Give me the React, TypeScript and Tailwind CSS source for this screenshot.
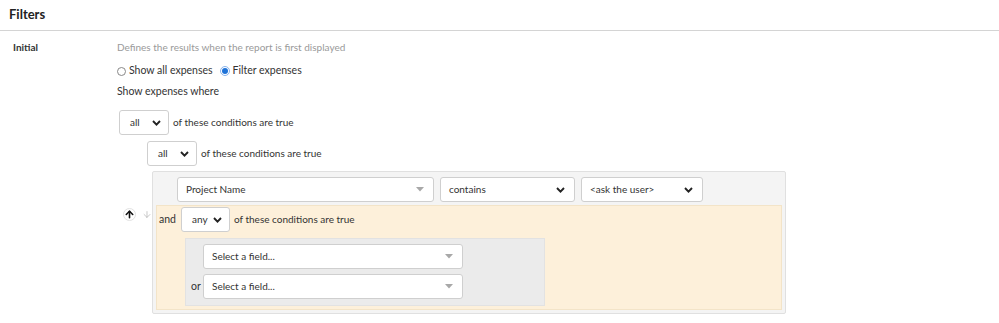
import { ArrowUp, ArrowDown } from "lucide-react"

function Chevron() {
    return (
        <svg width="9" height="6" viewBox="0 0 9 6" className="shrink-0">
            <path d="M1 1 L4.5 4.6 L8 1" fill="none" stroke="#222" strokeWidth="1.9" />
        </svg>
    )
}

function Caret() {
    return (
        <svg width="8" height="5" viewBox="0 0 8 5" className="shrink-0">
            <path d="M0 0 H8 L4 4.5 Z" fill="#a8a8a8" />
        </svg>
    )
}

function SmallSelect({ value, width }: { value: string; width: string }) {
    return (
        <div className={`${width} h-[25px] flex items-center justify-between pl-[10px] pr-[7px] bg-white border border-[#cfcfcf] rounded-[3px] text-[#333]`}>
            <span>{value}</span>
            <Chevron />
        </div>
    )
}

function FieldSelect({ value, width, caret }: { value: string; width: string; caret?: boolean }) {
    return (
        <div className={`${width} h-[25px] flex items-center justify-between pl-[8px] pr-[9px] bg-white border border-[#cfcfcf] rounded-[3px] text-[#333]`}>
            <span>{value}</span>
            {caret ? <Caret /> : <Chevron />}
        </div>
    )
}

export default function App() {
    return (
        <main className="w-[999px] h-[323px] bg-white text-[10px] text-[#333] font-['Lato','Noto_Sans',sans-serif] overflow-hidden">
            <div className="h-[31px] border-b border-[#d4d4d4] pl-[9px] pt-[5px]">
                <h2 className="text-[13px] font-bold text-[#222]">Filters</h2>
            </div>
            <div className="flex pt-[8px]">
                <div className="w-[117px] pl-[13px] font-bold text-[#333] leading-[16px]">Initial</div>
                <div className="flex flex-col">
                    <p className="text-[#9a9a9a] leading-[16px]">Defines the results when the report is first displayed</p>
                    <div className="flex items-center mt-[8px] h-[16px] text-[10.5px]">
                        <span className="w-[9px] h-[9px] rounded-full border border-[#888] bg-white mr-[3px]" />
                        <span>Show all expenses</span>
                        <span className="ml-[7px] w-[10px] h-[10px] rounded-full border border-[#8ab4ec] bg-white flex items-center justify-center mr-[3px]">
                            <span className="w-[6px] h-[6px] rounded-full bg-[#1f73d8]" />
                        </span>
                        <span>Filter expenses</span>
                    </div>
                    <p className="mt-[4px] leading-[16px] text-[10.5px]">Show expenses where</p>

                    <div className="flex items-center gap-[4px] mt-[11px] ml-[2px]">
                        <SmallSelect value="all" width="w-[50px]" />
                        <span>of these conditions are true</span>
                    </div>
                    <div className="flex items-center gap-[4px] mt-[6px] ml-[30px]">
                        <SmallSelect value="all" width="w-[50px]" />
                        <span>of these conditions are true</span>
                    </div>

                    <div className="flex items-start mt-[5px] ml-[4px]">
                        <div className="w-[31px] mt-[37px] flex items-center gap-[6px] pl-[2px]">
                            <span className="w-[13px] h-[13px] rounded-full bg-white border border-[#e2e2e2] flex items-center justify-center">
                                <ArrowUp size={11} strokeWidth={3.5} color="#111" />
                            </span>
                            <ArrowDown size={11} strokeWidth={1.8} color="#b5b5b5" />
                        </div>
                        <div className="w-[634px] h-[143px] bg-[#f4f4f4] border border-[#e0e0e0] rounded-[2px] pt-[5px] px-[3px] pb-[3px] flex flex-col">
                            <div className="flex gap-[6px] pl-[21px]">
                                <FieldSelect value="Project Name" width="w-[257px]" caret />
                                <FieldSelect value="contains" width="w-[135px]" />
                                <FieldSelect value="<ask the user>" width="w-[122px]" />
                            </div>
                            <div className="mt-[3px] flex-1 bg-[#fdf0da] border border-[#f3e4c8] pt-[1px] pl-[2px]">
                                <div className="flex items-center gap-[4px]">
                                    <span className="w-[18px] text-[10.5px]">and</span>
                                    <SmallSelect value="any" width="w-[49px]" />
                                    <span>of these conditions are true</span>
                                </div>
                                <div className="mt-[6px] ml-[26px] w-[360px] h-[68px] bg-[#ebebeb] border border-[#e2e2e2] pt-[5px] flex flex-col gap-[5px]">
                                    <div className="flex items-center">
                                        <span className="w-[17px] pl-[5px]"></span>
                                        <FieldSelect value="Select a field..." width="w-[260px]" caret />
                                    </div>
                                    <div className="flex items-center">
                                        <span className="w-[17px] pl-[5px] text-[10.5px]">or</span>
                                        <FieldSelect value="Select a field..." width="w-[260px]" caret />
                                    </div>
                                </div>
                            </div>
                        </div>
                    </div>
                </div>
            </div>
        </main>
    )
}
